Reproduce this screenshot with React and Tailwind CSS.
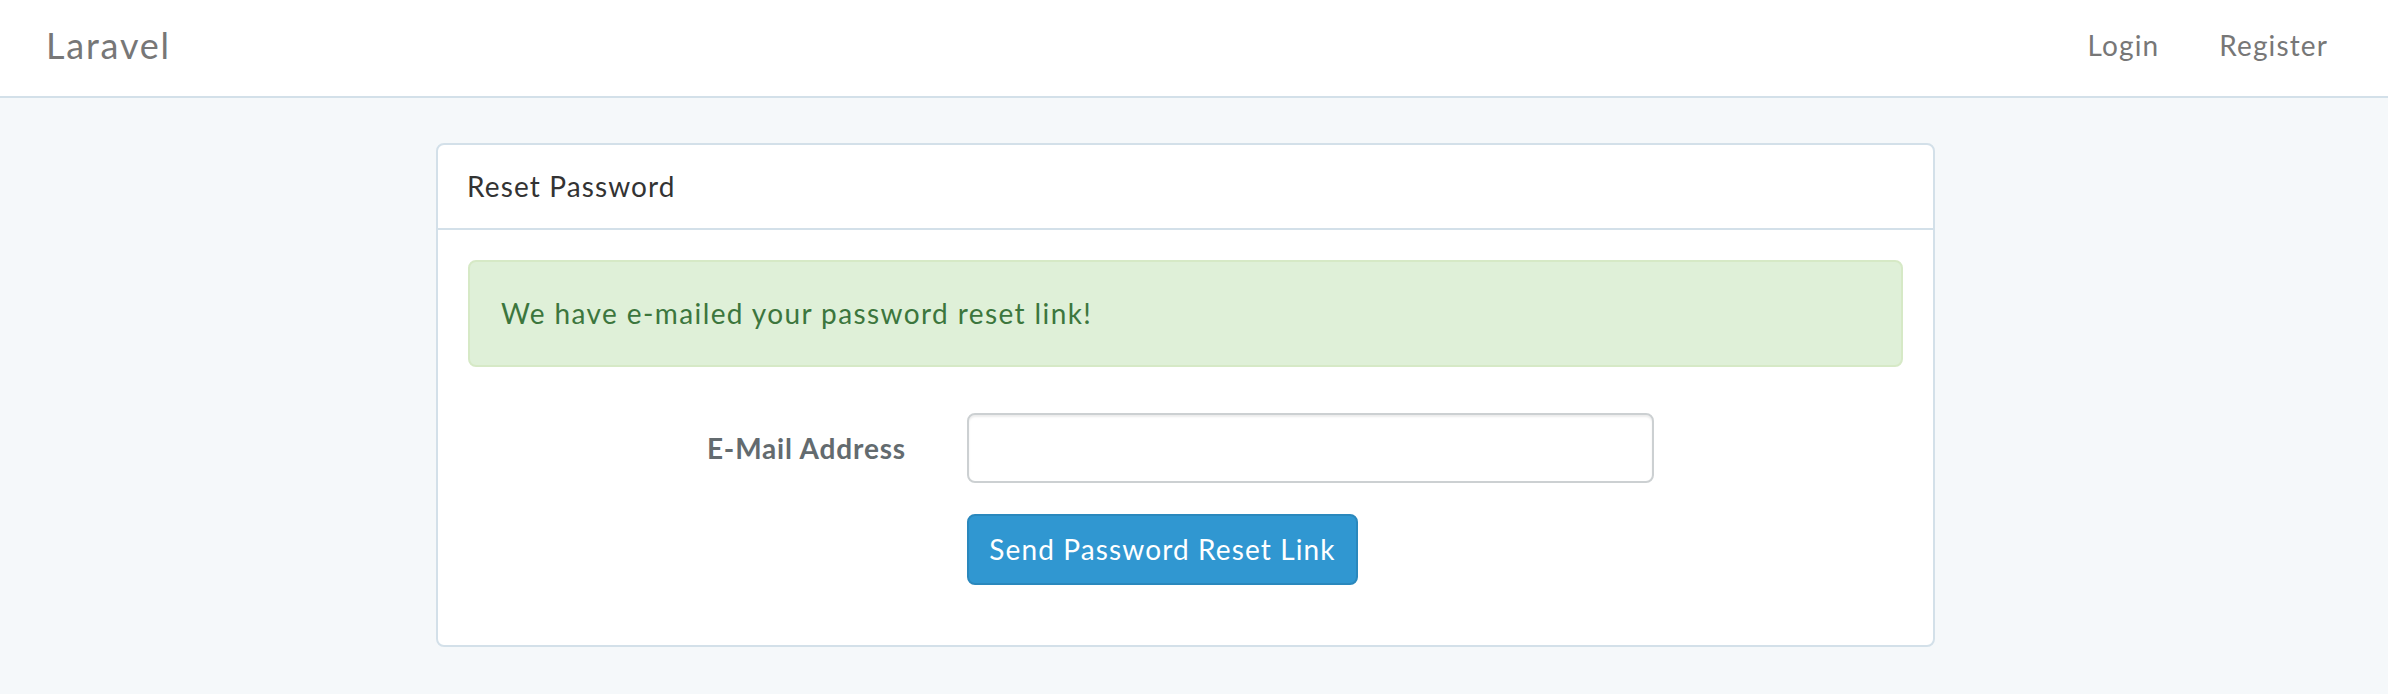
export default function App() {
  return (
    <div className="min-h-screen bg-[#f5f8fa] font-['Lato',sans-serif] text-[28px] leading-[1.6] tracking-[0.04em] text-[#636b6f]">
      {/* top navbar */}
      <nav className="h-[98px] bg-white border-b-2 border-[#d3e0e9] flex items-center justify-between pl-[46px] pr-[30px] pb-[6px]">
        <a href="#" className="text-[36px] text-[#777777] leading-none tracking-[0.05em]">
          Laravel
        </a>
        <ul className="flex items-center text-[#777777]">
          <li>
            <a href="#" className="block px-[30px]">Login</a>
          </li>
          <li>
            <a href="#" className="block pl-[30px] pr-[30px]">Register</a>
          </li>
        </ul>
      </nav>

      <main className="flex justify-center pt-[45px] pb-[40px]">
        <div className="w-[1499px] mr-[17px] bg-white border-2 border-[#d3e0e9] rounded-[8px]">
          <div className="h-[85px] border-b-2 border-[#d3e0e9] flex items-center px-[29px] text-[#333333]">
            Reset Password
          </div>

          <div className="p-[30px]">
            <div className="h-[107px] bg-[#dff0d8] border-2 border-[#d6e9c6] rounded-[8px] flex items-center px-[31px] text-[#3c763d] tracking-[0.05em]">
              We have e-mailed your password reset link!
            </div>

            <form className="mt-[46px]" onSubmit={(e) => e.preventDefault()}>
              <div className="flex items-center">
                <label htmlFor="email" className="w-[438px] text-right font-bold tracking-[0.03em] text-[#636b6f]">
                  E-Mail Address
                </label>
                <input
                  id="email"
                  type="email"
                  className="ml-[61px] w-[687px] h-[70px] bg-white border-2 border-[#ccd0d2] rounded-[8px] px-[24px] shadow-[inset_0_2px_2px_rgba(0,0,0,0.075)] outline-none"
                />
              </div>

              <div className="mt-[31px] mb-[30px] pl-[499px]">
                <button
                  type="submit"
                  className="w-[391px] h-[71px] bg-[#3097d1] border-2 border-[#2a88bd] rounded-[8px] text-white text-[28px] tracking-[0.04em] flex items-center justify-center"
                >
                  Send Password Reset Link
                </button>
              </div>
            </form>
          </div>
        </div>
      </main>
    </div>
  );
}
